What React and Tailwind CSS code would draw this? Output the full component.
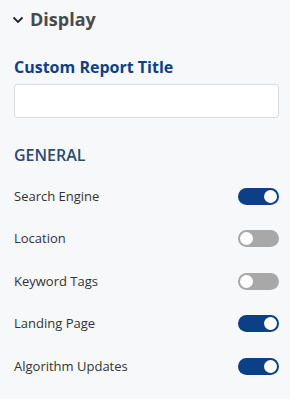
import { useState } from "react";

const rows = [
  { label: "Search Engine", on: true },
  { label: "Location", on: false },
  { label: "Keyword Tags", on: false },
  { label: "Landing Page", on: true },
  { label: "Algorithm Updates", on: true },
];

function Toggle({ on, onClick }) {
  return (
    <button
      onClick={onClick}
      className={`relative h-[17px] w-[41px] rounded-full ${on ? "bg-[#0b3f86]" : "bg-[#a8a8a8]"}`}
    >
      <span
        className={`absolute top-[2px] h-[13px] w-[13px] rounded-full bg-white ${on ? "right-[2px]" : "left-[2px]"}`}
      />
    </button>
  );
}

export default function App() {
  const [items, setItems] = useState(rows);

  const flip = (i) =>
    setItems(items.map((r, j) => (j === i ? { ...r, on: !r.on } : r)));

  return (
    <div className="min-h-[399px] w-[290px] bg-[#f7f8fa] pl-[14px] pr-[11px] pt-[6px] font-['Open_Sans',sans-serif]">
      <div className="flex items-center gap-[6px]">
        <svg width="12" height="8" viewBox="0 0 12 8" className="ml-[-2px]">
          <path d="M1.5 1.5 L6 6 L10.5 1.5" fill="none" stroke="#222" strokeWidth="1.8" />
        </svg>
        <span className="text-[18px] font-bold text-[#4a4a4a]">Display</span>
      </div>

      <div className="mt-[22px] text-[16px] font-bold text-[#0d3f87]">Custom Report Title</div>
      <input
        type="text"
        className="mt-[5px] h-[34px] w-full rounded-[3px] border border-[#dcdcdc] bg-white px-2 text-[13px] outline-none"
      />

      <div className="mt-[25px] text-[16px] font-semibold text-[#2c4a70]">GENERAL</div>

      <div className="mt-[8px] flex flex-col">
        {items.map((r, i) => (
          <div key={r.label} className="flex h-[42.5px] items-center justify-between">
            <span className="text-[13px] text-[#333]">{r.label}</span>
            <Toggle on={r.on} onClick={() => flip(i)} />
          </div>
        ))}
      </div>
    </div>
  );
}
